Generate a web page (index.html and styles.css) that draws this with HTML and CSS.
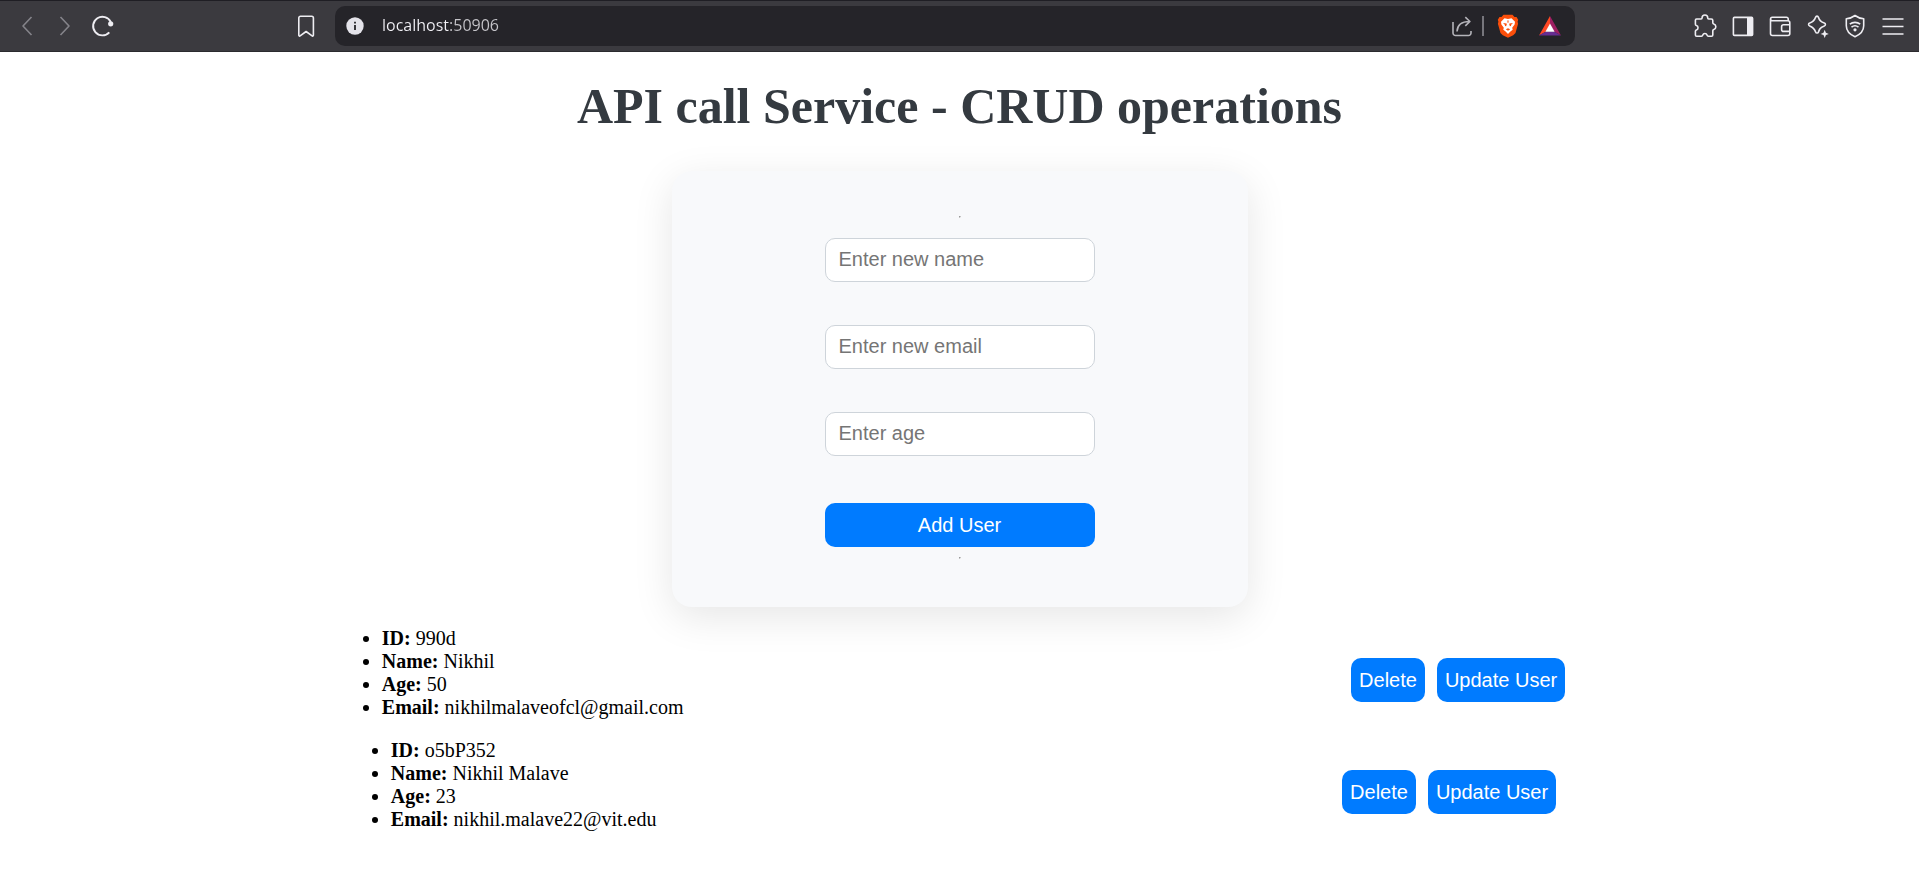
FILE: index.html
```html
<!DOCTYPE html>
<html lang="en">
<head>
<meta charset="utf-8">
<title>API call Service</title>
<link rel="stylesheet" href="styles.css">
</head>
<body>
<header class="toolbar">
  <nav class="nav" aria-label="Navigation">
    <button class="icon-btn dim" aria-label="Back"><svg viewBox="0 0 24 24"><path d="M16.500 3 8 12l8.500 9"/></svg></button>
    <button class="icon-btn dim" aria-label="Forward"><svg viewBox="0 0 24 24"><path d="M7.500 3 16 12l-8.500 9"/></svg></button>
    <button class="icon-btn" aria-label="Reload"><svg viewBox="0 0 24 24"><path d="M19.800 8A9.300 9.300 0 1 0 18.300 18.300" stroke-width="1.900"/><circle cx="19.700" cy="9.800" r="2.600" class="solid"/></svg></button>
  </nav>
  <button class="icon-btn" aria-label="Bookmark"><svg viewBox="0 0 24 24"><path d="M6.500 2.200h11.200a1.700 1.700 0 0 1 1.700 1.700v17.400a.8.8 0 0 1-1.300.6L12.100 17.500l-6 4.400a.8.8 0 0 1-1.300-.6V3.900a1.700 1.700 0 0 1 1.700-1.700z"/></svg></button>
  <div class="address">
    <svg class="info" viewBox="0 0 18 18" aria-hidden="true"><circle cx="9" cy="9" r="8.700" fill="#e4e3ea"/><path d="M9 8v5M9 4.700v1.800" stroke="#252429" stroke-width="1.800" fill="none"/></svg>
    <input class="url" type="text" value="localhost:50906" aria-label="Address">
    <button class="icon-btn share" aria-label="Share"><svg viewBox="0 0 24 24"><path d="M3 8v11a2.500 2.500 0 0 0 2.500 2.500h13A2.500 2.500 0 0 0 21 19v-2M7 17.500C7.300 11 11 7.500 19.500 7.500M15.300 3.200l4.600 4.300-4.600 4.400"/></svg></button>
    <span class="divider"></span>
    <button class="icon-btn shield" aria-label="Brave Shields"><svg viewBox="0 0 24 24"><path fill="#fb4f0b" stroke="none" d="M7.500.8h9l2 2.200 2-.1 1.700 2.900-.6 2 .5 2-2.600 9.300-2.300 2.200L12 23.800l-5.200-2.500-2.300-2.200L1.900 9.800l.5-2-.6-2 1.700-2.900 2 .1z"/><path fill="#fff" stroke="none" d="M8.500 4.300 12 5l3.500-.7L19 7.800l-.4 2.600-2.400 3.400.5 2-2 1.500L12 20l-2.700-2.700-2-1.500.5-2-2.400-3.400L5 7.800z"/><path fill="#fb4f0b" stroke="none" d="m7 9 3.600.5.200.8-.7 1.900-1.100-.2-.2-1.200zM17 9l-3.600.5-.2.8.7 1.900 1.100-.2.200-1.200zM11.300 6.500h1.400L12.300 9h-.6zM9.800 15.200l2.200-.9 2.200.9L12 16.700z"/></svg></button>
    <button class="icon-btn" aria-label="Rewards"><svg viewBox="0 0 24 24"><path fill="#ff4724" stroke="none" d="M12 2 1 21.500l7-4L12 11z"/><path fill="#9e1f63" stroke="none" d="m12 2 11 19.500-7-4L12 11z"/><path fill="#662d91" stroke="none" d="M1 21.500h22l-7-4H8z"/><path fill="#fff" stroke="none" d="m12 9.500 4.600 8.300H7.400z"/></svg></button>
  </div>
  <div class="tools">
    <button class="icon-btn" aria-label="Extensions"><svg viewBox="0 0 24 24"><path d="M3.600 5h4.500c.8 0 1-.5 1-1.200a2.800 2.800 0 0 1 5.600 0c0 .7.200 1.200 1 1.200h2.600a1.500 1.500 0 0 1 1.500 1.500v2.200c0 .8.400 1.100 1 1.300a2.800 2.800 0 0 1 0 5.400c-.6.200-1 .5-1 1.300v4.200a1.300 1.300 0 0 1-1.300 1.300h-3.200c-.8 0-1.100-.5-1.300-1.100a2.200 2.200 0 0 0-4.200 0c-.2.600-.5 1.100-1.300 1.100H3.700a1.300 1.300 0 0 1-1.300-1.300v-3.600c0-.8.400-1.100 1-1.300a2.300 2.300 0 0 0 0-4.400c-.6-.2-1-.5-1-1.300v-4A1.300 1.300 0 0 1 3.600 5z"/></svg></button>
    <button class="icon-btn" aria-label="Sidebar"><svg viewBox="0 0 24 24"><rect x="2.400" y="3.400" width="19.200" height="18" rx="1"/><path class="solid" d="M16 3h5.500v18.500H16z"/></svg></button>
    <button class="icon-btn" aria-label="Wallet"><svg viewBox="0 0 24 24"><path d="M20.200 6.800V5a1.700 1.700 0 0 0-1.700-1.700H4.300A1.700 1.700 0 0 0 4.300 6.800h15.500a2 2 0 0 1 2 2v10.700a2 2 0 0 1-2 2H4.500a2 2 0 0 1-2-2V5M21.800 10.800h-6.200a2 2 0 0 0-2 2v2.600a2 2 0 0 0 2 2h6.200"/></svg></button>
    <button class="icon-btn" aria-label="Assistant"><svg viewBox="0 0 24 24"><path d="M9.600 3.200c.5-1.400 2.300-1.400 2.800 0 1 3.400 2.200 4.600 5.900 5.900 1.500.5 1.500 2.300 0 2.800-2.300.8-3.700 1.700-4.500 3.100-.5.900-.9 1.700-1.300 2.900-.5 1.400-2.400 1.400-2.900 0-1.200-3.500-2.400-4.700-5.900-6-1.500-.5-1.500-2.300 0-2.800 3.500-1.300 4.700-2.500 5.900-5.900z"/><path class="solid" d="m18.700 15.800 1.200 2.900 2.900 1.200-2.900 1.200-1.200 2.900-1.200-2.900-2.900-1.200 2.900-1.200z"/></svg></button>
    <button class="icon-btn" aria-label="VPN"><svg viewBox="0 0 24 24"><path d="M12 1.500c2.500 1.900 5.200 2.900 8.700 3.300v7c0 4.700-3.200 8.600-8.700 11-5.500-2.400-8.700-6.300-8.700-11v-7c3.500-.4 6.200-1.400 8.700-3.300zM6.800 10.200c3-2.500 7.400-2.500 10.400 0M8.500 13.100c2-1.600 5-1.600 7 0"/><circle class="solid" cx="12" cy="15.800" r="1.600"/></svg></button>
    <button class="icon-btn" aria-label="Menu"><svg viewBox="0 0 24 24"><path d="M1.500 5h21M1.500 12.500h21M1.500 20h21"/></svg></button>
  </div>
</header>
<main class="page">
  <h1 class="title">API call Service - CRUD operations</h1>
  <form class="card">
    <hr class="rule">
    <div class="fields">
      <input class="field" type="text" placeholder="Enter new name" aria-label="Name">
      <input class="field" type="email" placeholder="Enter new email" aria-label="Email">
      <input class="field" type="text" placeholder="Enter age" aria-label="Age">
      <button class="btn" type="button">Add User</button>
    </div>
    <hr class="rule">
  </form>
  <section class="user">
    <ul class="details">
      <li><b>ID:</b> 990d</li>
      <li><b>Name:</b> Nikhil</li>
      <li><b>Age:</b> 50</li>
      <li><b>Email:</b> nikhilmalaveofcl@gmail.com</li>
    </ul>
    <div class="actions">
      <button class="btn" type="button">Delete</button>
      <button class="btn" type="button">Update User</button>
    </div>
  </section>
  <section class="user">
    <ul class="details">
      <li><b>ID:</b> o5bP352</li>
      <li><b>Name:</b> Nikhil Malave</li>
      <li><b>Age:</b> 23</li>
      <li><b>Email:</b> nikhil.malave22@vit.edu</li>
    </ul>
    <div class="actions">
      <button class="btn" type="button">Delete</button>
      <button class="btn" type="button">Update User</button>
    </div>
  </section>
</main>
</body>
</html>
```
FILE: styles.css
```css
* { box-sizing: border-box; }

body {
  margin: 0;
  background: #fff;
  color: #000;
  font: 20px/23px "Liberation Serif", serif;
}

/* Browser toolbar */
.toolbar {
  display: flex;
  align-items: center;
  height: 52px;
  padding: 0 14px 0 15px;
  background: #3b3a3f;
  border-top: 1px solid #1f1e24;
  border-bottom: 1px solid #2b2a2e;
}

.nav {
  display: flex;
  gap: 14px;
  flex: none;
  width: 279px;
}

.icon-btn {
  flex: none;
  width: 24px;
  height: 24px;
  padding: 0;
  border: 0;
  background: none;
  color: #eeedf2;
}

.icon-btn svg {
  display: block;
  width: 24px;
  height: 24px;
  fill: none;
  stroke: currentColor;
  stroke-width: 1.6;
  stroke-linejoin: round;
}

.icon-btn .solid {
  fill: currentColor;
  stroke: none;
}

.dim { color: #85848a; }

.address {
  display: flex;
  align-items: center;
  flex: 1;
  height: 40px;
  margin: 0 118px 0 17px;
  padding: 0 13px 0 11px;
  border-radius: 10px;
  background: #252429;
}

.info {
  flex: none;
  width: 18px;
  height: 18px;
}

.url {
  flex: 1;
  min-width: 0;
  height: 32px;
  margin: 0 16px 0 18px;
  padding: 0 0 2px;
  border: 0;
  background: linear-gradient(90deg, #f2f1f6 68px, #c6c5ca 68px);
  background-clip: text;
  color: transparent;
  font: 16px/24px "Open Sans", sans-serif;
}

.share { color: #b5b4ba; }

.divider {
  flex: none;
  width: 2px;
  height: 20px;
  margin: 0 12px 0 8px;
  background: #77767c;
}

.shield { margin-right: 18px; }

.tools {
  display: flex;
  justify-content: space-between;
  flex: none;
  width: 212px;
}

/* Page */
.page { padding: 0 8px; }

.title {
  margin: 0;
  padding: 25px 0 36px;
  color: #343a40;
  font-size: 50px;
  line-height: 58px;
  text-align: center;
}

.card {
  display: flex;
  flex-direction: column;
  align-items: center;
  max-width: 576px;
  margin: 0 auto;
  padding: 35px 0 38px;
  border-radius: 20px;
  background: #f8f9fb;
  box-shadow: 0 10px 40px rgba(0, 0, 0, 0.1);
}

.rule {
  margin: 10px 0;
}

.fields {
  display: grid;
  gap: 43px;
  width: 270px;
  padding-top: 10px;
}

.field,
.btn {
  height: 44px;
  border-radius: 10px;
  font: 20px/23px "Liberation Sans", Arial, sans-serif;
}

.field {
  width: 100%;
  padding: 0 13px 2px;
  border: 1px solid #ced4da;
  background: #fff;
}

.field::placeholder { color: #757575; }

.btn {
  padding: 0 8px;
  border: 0;
  background: #007bff;
  color: #fff;
}

.fields .btn { margin-top: 4px; }

.user {
  display: flex;
  justify-content: space-around;
  align-items: center;
  padding-top: 20px;
}

.details {
  margin: 0;
  padding-left: 40px;
}

.actions {
  display: flex;
  margin-top: 14px;
}

.actions .btn { margin-right: 12px; }
```
